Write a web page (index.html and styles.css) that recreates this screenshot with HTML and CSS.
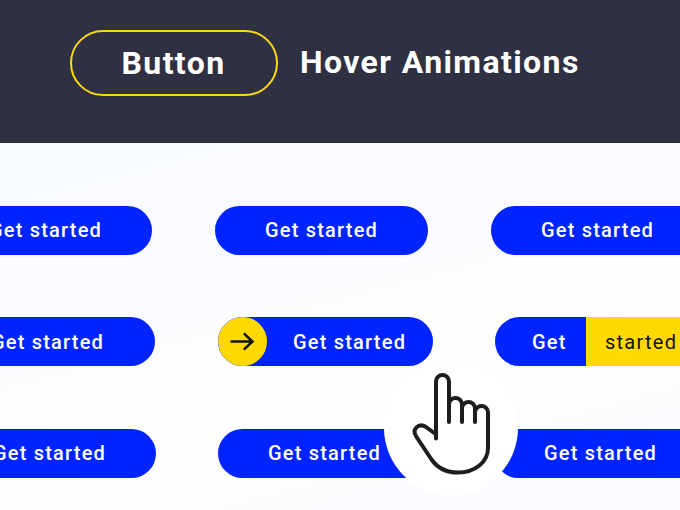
FILE: index.html
```html
<!DOCTYPE html>
<html lang="en">
<head>
<meta charset="utf-8">
<title>Button Hover Animations</title>
<link rel="stylesheet" href="styles.css">
</head>
<body>
<header class="header">
  <h1 class="title"><span class="title-pill">Button</span><span class="title-rest">Hover Animations</span></h1>
</header>
<main class="showcase">
  <div class="row row-first">
    <button class="btn">Get started</button>
    <button class="btn">Get started</button>
    <button class="btn">Get started</button>
  </div>
  <div class="row row-second">
    <button class="btn">Get started</button>
    <button class="btn btn-arrow">
      <span class="arrow"><svg width="26" height="20" viewBox="0 0 26 20"><path d="M1.500 9.500H24M14.800 1.300L23.500 9.500L14.800 17.700"/></svg></span>
      <span class="arrow-label">Get started</span>
    </button>
    <button class="btn btn-split"><span class="split-left">Get</span><span class="split-right">started</span></button>
  </div>
  <div class="row row-third">
    <button class="btn">Get started</button>
    <button class="btn">Get started</button>
    <button class="btn">Get started</button>
  </div>
  <div class="pointer">
    <svg class="hand" width="134" height="134" viewBox="384 361 134 134">
      <path d="M436 438.500V381.500a6.500 6.500 0 0 1 13 0V422M449 404.500a6.500 6.500 0 0 1 13 0V422M462 408.500a6.500 6.500 0 0 1 13 0V422M475 412.500a6.500 6.500 0 0 1 13 0V448C488 462 475 472.500 458 472.500C447 472.500 437.500 468 431.500 459.500L416.200 436.500C411.500 429.500 418.500 422.500 426 427L435.500 434"/>
    </svg>
  </div>
</main>
</body>
</html>
```
FILE: styles.css
```css
* { box-sizing: border-box; }
body {
  margin: 0;
  width: 680px;
  height: 510px;
  overflow: hidden;
  font-family: Roboto, sans-serif;
}
.header {
  height: 143px;
  padding: 30px 0 0 70px;
  background: #2f3142;
}
.title {
  display: flex;
  align-items: center;
  gap: 22px;
  margin: 0;
  color: #fff;
  font-size: 32px;
  font-weight: 700;
  line-height: 38px;
  letter-spacing: 1.400px;
  white-space: nowrap;
}
.title-pill {
  display: flex;
  align-items: center;
  justify-content: center;
  width: 208px;
  height: 66px;
  padding-right: 1px;
  border: 2px solid #fbd914;
  border-radius: 33px;
}
.title-rest { padding-bottom: 2px; }
.showcase {
  position: relative;
  display: flex;
  flex-direction: column;
  height: 367px;
  padding-top: 63px;
  overflow: hidden;
  background: linear-gradient(165deg, #f7faff 0%, #fafbff 30%, #fefeff 58%, #fafbff 100%);
}
.row { display: flex; flex: none; }
.row-first { gap: 63px; margin: 0 0 62px -61px; }
.row-second { gap: 62.500px; margin: 0 0 63px -60px; }
.row-third { gap: 62px; margin-left: -57px; }
.row-third .btn:last-child { margin-left: 1px; }
.btn {
  display: flex;
  flex: none;
  align-items: center;
  justify-content: center;
  width: 213px;
  height: 49px;
  padding: 0 0 1px;
  overflow: hidden;
  border: 0;
  border-radius: 25px;
  background: #0024ff;
  color: #fff;
  font-family: inherit;
  font-size: 20px;
  font-weight: 500;
  letter-spacing: 1.200px;
  white-space: nowrap;
}
.row-second .btn { width: 215px; padding: 0; }
.btn-arrow { justify-content: flex-start; }
.arrow {
  display: flex;
  flex: none;
  align-items: center;
  justify-content: center;
  width: 49px;
  height: 49px;
  border-radius: 50%;
  background: #ffd900;
}
.arrow svg { fill: none; stroke: #111; stroke-width: 2.500; }
.arrow-label { margin-left: 26.500px; }
.btn-split { justify-content: flex-start; }
.split-left { width: 91px; padding-left: 37px; text-align: left; }
.split-right {
  width: 124px;
  padding: 1px 0 0 19px;
  background: #ffd900;
  color: #111;
  font-weight: 400;
  letter-spacing: 1.250px;
  line-height: 48px;
  text-align: left;
}
.pointer {
  position: absolute;
  left: 384px;
  top: 218px;
  width: 134px;
  height: 134px;
  border-radius: 50%;
  background: #fff;
}
.hand {
  display: block;
  fill: none;
  stroke: #1d1d1b;
  stroke-width: 4;
  stroke-linecap: round;
  stroke-linejoin: round;
}
```
